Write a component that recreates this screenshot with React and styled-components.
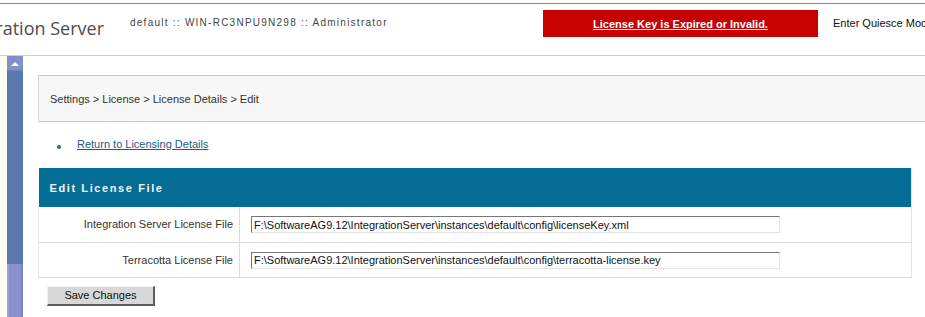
import React from "react";
import styled, { createGlobalStyle } from "styled-components";

const GlobalStyle = createGlobalStyle`
  html, body {
    margin: 0;
    padding: 0;
    background: #fff;
    overflow: hidden;
  }
  body {
    font-family: "Liberation Sans", Arial, sans-serif;
    font-size: 11px;
    color: #333;
  }
`;

const Page = styled.div`
  display: flex;
  flex-flow: column;
  width: 925px;
  height: 317px;
  overflow: hidden;
`;

const Header = styled.div`
  display: flex;
  align-items: flex-start;
  margin-top: 3px;
  border-top: 1px solid #858585;
  border-bottom: 1px solid #d0d0d0;
  padding-top: 6px;
  box-sizing: border-box;
  height: 53px;
  white-space: nowrap;
  overflow: hidden;
`;

const TitleClip = styled.div`
  display: flex;
  justify-content: flex-end;
  flex: 0 0 104px;
  overflow: hidden;
  margin-top: 5px;
`;

const Title = styled.span`
  font-family: "Open Sans", sans-serif;
  font-size: 18px;
  line-height: 26px;
  color: #4d4d4d;
`;

const ServerInfo = styled.div`
  flex: 0 0 439px;
  box-sizing: border-box;
  padding-left: 26px;
  margin-top: 7px;
  font-size: 10px;
  letter-spacing: 1.25px;
  color: #444;
`;

const Alert = styled.a`
  display: flex;
  justify-content: center;
  align-items: center;
  flex: 0 0 275px;
  height: 27px;
  background: #c70000;
  color: #fff;
  font-weight: bold;
  font-size: 11px;
  text-decoration: underline;
`;

const Quiesce = styled.span`
  margin-left: 15px;
  margin-top: 7px;
  color: #111;
`;

const Body = styled.div`
  display: flex;
  flex: 1;
`;

const LeftFrame = styled.div`
  display: flex;
  flex: 0 0 23px;
  background: #fffef4;
  padding-left: 7px;
  box-sizing: border-box;
`;

const ScrollBar = styled.div`
  display: flex;
  flex-flow: column;
  width: 16px;
`;

const ArrowButton = styled.div`
  display: flex;
  justify-content: center;
  align-items: center;
  height: 14px;
  background: #7b93c6;
  border-bottom: 1px solid #6c86bb;
`;

const Thumb = styled.div`
  height: 193px;
  background: #5a78ad;
`;

const Track = styled.div`
  flex: 1;
  background: #8a91cf;
  border-left: 2px solid #9aa2dc;
  border-right: 2px solid #7c84c6;
`;

const Content = styled.div`
  display: flex;
  flex-flow: column;
  align-items: flex-start;
  padding: 19px 0 0 15px;
`;

const Breadcrumb = styled.div`
  display: flex;
  align-items: center;
  width: 900px;
  height: 45px;
  padding-left: 11px;
  background: #f7f7f7;
  border-top: 1px solid #c9c9c9;
  border-bottom: 1px solid #c9c9c9;
  border-left: 1px solid #d6d6d6;
  color: #333;
`;

const LinkList = styled.ul`
  list-style: none;
  margin: 16px 0 0 0;
  padding: 0 0 0 39px;
`;

const LinkItem = styled.li`
  position: relative;
  line-height: 13px;

  &::before {
    content: "";
    position: absolute;
    left: -20px;
    top: 7px;
    width: 4px;
    height: 4px;
    border-radius: 50%;
    background: #1d6d8c;
  }
`;

const BackLink = styled.a`
  color: #1d5c80;
  text-decoration: underline;
`;

const Table = styled.table`
  width: 874px;
  margin-top: 17px;
  border-collapse: collapse;
  table-layout: fixed;
  border-right: 1px solid #e4e4e4;
`;

const HeadCell = styled.th`
  height: 39px;
  padding: 0 0 0 11px;
  background: #046d96;
  color: #f2f6f8;
  font-size: 11px;
  font-weight: bold;
  letter-spacing: 1.6px;
  text-align: left;
`;

const Row = styled.tr`
  height: 35px;
  border-bottom: 1px solid #dcdcdc;
`;

const LabelCell = styled.td`
  padding: 0 6px 0 0;
  border-left: 1px solid #e6e6e6;
  border-right: 1px solid #dcdcdc;
  text-align: right;
  color: #333;
  white-space: nowrap;
`;

const FieldCell = styled.td`
  padding: 0 0 0 11px;
`;

const PathInput = styled.input`
  display: block;
  width: 529px;
  height: 17px;
  box-sizing: border-box;
  margin-top: 1px;
  padding: 0 2px;
  font-family: "Liberation Sans", Arial, sans-serif;
  font-size: 11px;
  color: #111;
  background: #fff;
  border-top: 1px solid #777;
  border-left: 1px solid #777;
  border-right: 1px solid #e2e2e2;
  border-bottom: 1px solid #e2e2e2;
  outline: none;
`;

const SaveButton = styled.button`
  width: 108px;
  height: 20px;
  margin: 8px 0 0 9px;
  padding: 0;
  font-family: "Liberation Sans", Arial, sans-serif;
  font-size: 11px;
  color: #111;
  background: #d8d8d8;
  border-top: 1px solid #f2f2f2;
  border-left: 1px solid #f2f2f2;
  border-right: 2px solid #5c5c5c;
  border-bottom: 2px solid #5c5c5c;
`;

const files = [
  {
    label: "Integration Server License File",
    path: "F:\\SoftwareAG9.12\\IntegrationServer\\instances\\default\\config\\licenseKey.xml",
  },
  {
    label: "Terracotta License File",
    path: "F:\\SoftwareAG9.12\\IntegrationServer\\instances\\default\\config\\terracotta-license.key",
  },
];

export default function App() {
  return (
    <>
      <GlobalStyle />
      <Page>
        <Header>
          <TitleClip>
            <Title>Integration Server</Title>
          </TitleClip>
          <ServerInfo>default :: WIN-RC3NPU9N298 :: Administrator</ServerInfo>
          <Alert href="#">License Key is Expired or Invalid.</Alert>
          <Quiesce>Enter Quiesce Mode</Quiesce>
        </Header>
        <Body>
          <LeftFrame>
            <ScrollBar>
              <ArrowButton>
                <svg width="8" height="5" viewBox="0 0 8 5">
                  <path d="M0 5 L4 1 L8 5 Z" fill="#fff" />
                </svg>
              </ArrowButton>
              <Thumb />
              <Track />
            </ScrollBar>
          </LeftFrame>
          <Content>
            <Breadcrumb>Settings &gt; License &gt; License Details &gt; Edit</Breadcrumb>
            <LinkList>
              <LinkItem>
                <BackLink href="#">Return to Licensing Details</BackLink>
              </LinkItem>
            </LinkList>
            <Table>
              <colgroup>
                <col style={{ width: 201 }} />
                <col />
              </colgroup>
              <thead>
                <tr>
                  <HeadCell colSpan={2}>Edit License File</HeadCell>
                </tr>
              </thead>
              <tbody>
                {files.map((f) => (
                  <Row key={f.label}>
                    <LabelCell>{f.label}</LabelCell>
                    <FieldCell>
                      <PathInput defaultValue={f.path} />
                    </FieldCell>
                  </Row>
                ))}
              </tbody>
            </Table>
            <SaveButton>Save Changes</SaveButton>
          </Content>
        </Body>
      </Page>
    </>
  );
}
